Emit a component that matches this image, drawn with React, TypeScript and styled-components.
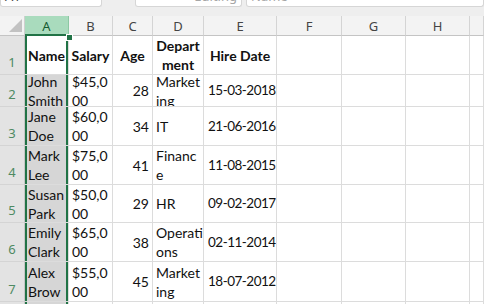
import styled, { createGlobalStyle } from "styled-components";

const GlobalStyle = createGlobalStyle`
  html, body {
    margin: 0;
    padding: 0;
    background: #ffffff;
    overflow: hidden;
  }
  body {
    font-family: Lato, "Open Sans", sans-serif;
  }
`;

const Page = styled.div`
  width: 484px;
  height: 304px;
  display: flex;
  flex-direction: column;
  overflow: hidden;
`;

const TopBar = styled.div`
  height: 16px;
  flex: none;
  display: flex;
  align-items: flex-start;
  background: #eeeeee;
`;

const TopBox = styled.div<{ $width?: number; $gapLeft?: number; $grow?: boolean }>`
  height: 7px;
  width: ${(p) => (p.$width ? `${p.$width}px` : "auto")};
  flex: ${(p) => (p.$grow ? "1" : "none")};
  margin-left: ${(p) => p.$gapLeft ?? 0}px;
  background: #ffffff;
  border: 1px solid #d6d6d6;
  border-top: none;
  border-radius: 0 0 3px 3px;
  display: flex;
  align-items: flex-end;
  overflow: hidden;
  box-sizing: border-box;
  padding: 0 4px;
`;

const BoxText = styled.span<{ $faint?: boolean; $right?: boolean }>`
  font-family: "Noto Sans", sans-serif;
  font-size: 13px;
  line-height: 19px;
  color: ${(p) => (p.$faint ? "#a6a6a6" : "#444444")};
  margin-left: ${(p) => (p.$right ? "auto" : "0")};
  white-space: nowrap;
`;

const Sheet = styled.div`
  position: relative;
  flex: 1;
  display: grid;
  grid-template-columns: 25px 44px 44px 40px 51px 73px 65px 64px 64px 1fr;
  grid-template-rows: 20px 39px 32px 39px 39px 38px 39px 40px 39px;
  overflow: hidden;
`;

const Corner = styled.div`
  background: #f3f3f3;
  border-right: 1px solid #cfcfcf;
  border-bottom: 1px solid #c4c4c4;
  display: flex;
  align-items: flex-end;
  justify-content: flex-end;
  padding: 0 2px 3px 0;
`;

const ColHeader = styled.div<{ $selected?: boolean }>`
  background: ${(p) => (p.$selected ? "#a9dbbd" : "#f3f3f3")};
  color: ${(p) => (p.$selected ? "#155c32" : "#444444")};
  border-right: 1px solid ${(p) => (p.$selected ? "#8cc8a3" : "#d4d4d4")};
  border-bottom: ${(p) => (p.$selected ? "2px solid #217346" : "1px solid #c4c4c4")};
  font-family: "Noto Sans", sans-serif;
  font-size: 13px;
  display: flex;
  align-items: center;
  justify-content: center;
  padding-top: 1px;
`;

const RowHeader = styled.div`
  background: #e3e3e3;
  color: #4e8a62;
  border-right: 1px solid #c6c6c6;
  border-bottom: 1px solid #d4d4d4;
  font-family: "Noto Sans", sans-serif;
  font-size: 13px;
  display: flex;
  align-items: flex-end;
  justify-content: center;
  padding-bottom: 3px;
`;

type Align = "left" | "right" | "center";

const Cell = styled.div<{ $align: Align; $bold?: boolean; $inSelection?: boolean; $active?: boolean }>`
  position: relative;
  background: ${(p) => (p.$inSelection && !p.$active ? "#d6d6d6" : "#ffffff")};
  border-right: 1px solid #dcdcdc;
  border-bottom: 1px solid #dcdcdc;
  box-shadow: ${(p) =>
    p.$inSelection ? "inset 2px 0 0 #217346, inset -2px 0 0 #217346" : "none"};
  display: flex;
  flex-direction: column;
  justify-content: center;
  align-items: ${(p) =>
    p.$align === "right" ? "flex-end" : p.$align === "center" ? "center" : "flex-start"};
  padding: 0 3px;
  overflow: hidden;
  font-size: 14px;
  line-height: 19px;
  font-weight: ${(p) => (p.$bold ? 700 : 400)};
  color: #111111;
  text-align: ${(p) => p.$align};
`;

const Line = styled.span<{ $date?: boolean }>`
  display: block;
  white-space: nowrap;
  font-size: ${(p) => (p.$date ? "13.5px" : "inherit")};
  letter-spacing: ${(p) => (p.$date ? "-0.5px" : "0")};
  padding-left: ${(p) => (p.$date ? "1px" : "0")};
`;

const FillHandle = styled.div`
  position: absolute;
  left: 66px;
  top: 18px;
  width: 5px;
  height: 5px;
  background: #217346;
  border: 1px solid #ffffff;
`;

const columns = ["A", "B", "C", "D", "E", "F", "G", "H", ""];
const aligns: Align[] = ["left", "left", "right", "left", "left"];

const rows: string[][][] = [
  [["Name"], ["Salary"], ["Age"], ["Depart", "ment"], ["Hire Date"]],
  [["John", "Smith"], ["$45,0", "00"], ["28"], ["Market", "ing"], ["15-03-2018"]],
  [["Jane", "Doe"], ["$60,0", "00"], ["34"], ["IT"], ["21-06-2016"]],
  [["Mark", "Lee"], ["$75,0", "00"], ["41"], ["Financ", "e"], ["11-08-2015"]],
  [["Susan", "Park"], ["$50,0", "00"], ["29"], ["HR"], ["09-02-2017"]],
  [["Emily", "Clark"], ["$65,0", "00"], ["38"], ["Operati", "ons"], ["02-11-2014"]],
  [["Alex", "Brow"], ["$55,0", "00"], ["45"], ["Market", "ing"], ["18-07-2012"]],
  [],
];

const SelectAllIcon = () => (
  <svg width="13" height="13" viewBox="0 0 13 13">
    <polygon points="13,0 13,13 0,13" fill="#c2c2c2" />
  </svg>
);

const App = () => {
  return (
    <Page>
      <GlobalStyle />
      <TopBar>
        <TopBox $width={102}>
          <BoxText>A1</BoxText>
        </TopBox>
        <TopBox $width={107} $gapLeft={33}>
          <BoxText $faint $right>
            Editing
          </BoxText>
        </TopBox>
        <TopBox $grow $gapLeft={4}>
          <BoxText $faint>Name</BoxText>
        </TopBox>
      </TopBar>
      <Sheet>
        <Corner>
          <SelectAllIcon />
        </Corner>
        {columns.map((c, i) => (
          <ColHeader key={`h${i}`} $selected={c === "A"}>
            {c}
          </ColHeader>
        ))}
        {rows.map((row, r) => (
          <>
            <RowHeader key={`r${r}`}>{r + 1}</RowHeader>
            {columns.map((_, c) => {
              const lines = row[c] ?? [];
              const header = r === 0;
              return (
                <Cell
                  key={`c${r}-${c}`}
                  $align={header ? "center" : aligns[c] ?? "left"}
                  $bold={header}
                  $inSelection={c === 0}
                  $active={c === 0 && r === 0}
                >
                  {lines.map((t) => (
                    <Line key={t} $date={c === 4 && !header}>
                      {t}
                    </Line>
                  ))}
                </Cell>
              );
            })}
          </>
        ))}
        <FillHandle />
      </Sheet>
    </Page>
  );
};

export default App;
